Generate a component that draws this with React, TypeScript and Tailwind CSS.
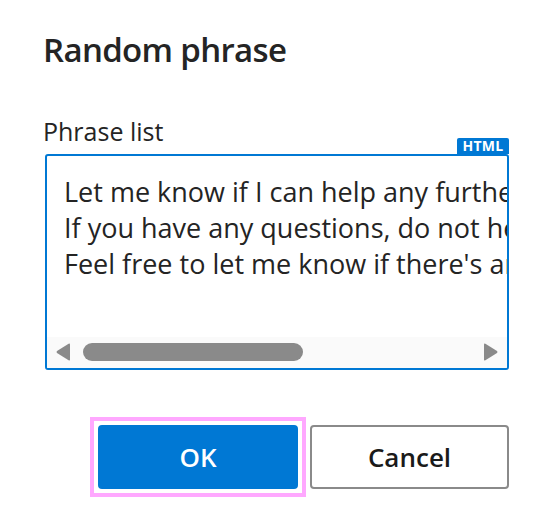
const phrases = [
  "Let me know if I can help any further.",
  "If you have any questions, do not hesitate to ask.",
  "Feel free to let me know if there's anything else I can do.",
];

function ScrollArrow({ dir }: { dir: "left" | "right" }) {
  return (
    <svg width="14" height="18" viewBox="0 0 14 18" aria-hidden>
      {dir === "left" ? (
        <path d="M12.6 0.8 L1 8 Q0 9 1 10 L12.6 17.2 Q14 18 14 16.5 L14 1.5 Q14 0 12.6 0.8 Z" fill="#8a8a8a" />
      ) : (
        <path d="M1.4 0.8 L13 8 Q14 9 13 10 L1.4 17.2 Q0 18 0 16.5 L0 1.5 Q0 0 1.4 0.8 Z" fill="#8a8a8a" />
      )}
    </svg>
  );
}

export default function App() {
  return (
    <div className="min-h-screen bg-white px-[45px] pt-[28px] font-['Open_Sans',sans-serif] text-[#242424]">
      <h1 className="-ml-[2px] text-[33px] font-semibold leading-[44px] tracking-[-0.02em]">Random phrase</h1>

      <label className="-ml-[2px] mt-[43px] block text-[25px] leading-[32px]">Phrase list</label>

      <div className="relative mt-[7px]">
        <span className="absolute -top-[16px] right-0 flex h-[16px] w-[52px] items-center justify-center rounded-t-[2px] bg-[#0078d4] text-[14px] font-bold leading-none tracking-[0.02em] text-white">
          HTML
        </span>
        <div className="flex h-[216px] flex-col overflow-hidden rounded-[3px] border-2 border-[#0078d4]">
          <div className="flex-1 overflow-hidden whitespace-pre pl-[17px] pt-[18px] text-[27px] leading-[36px]">
            {phrases.map((p) => (
              <div key={p}>{p}</div>
            ))}
          </div>
          <div className="flex h-[31px] items-center bg-[#fafafa] px-[9px] pb-[1px]">
            <ScrollArrow dir="left" />
            <div className="ml-[13px] h-[18px] w-[220px] rounded-full bg-[#8a8a8a]" />
            <div className="flex-1" />
            <ScrollArrow dir="right" />
          </div>
        </div>
      </div>

      <div className="mt-[47px] flex items-center justify-end gap-[4px]">
        <div className="border-4 border-[#ffa8ff] p-[4px]">
          <button
            type="button"
            className="block h-[64px] w-[200px] rounded-[4px] bg-[#0078d4] text-[26px] font-semibold text-white"
          >
            OK
          </button>
        </div>
        <button
          type="button"
          className="h-[64px] w-[199px] rounded-[4px] border-2 border-[#8a8a8a] bg-white text-[26px] font-semibold text-[#1a1a1a]"
        >
          Cancel
        </button>
      </div>
    </div>
  );
}
